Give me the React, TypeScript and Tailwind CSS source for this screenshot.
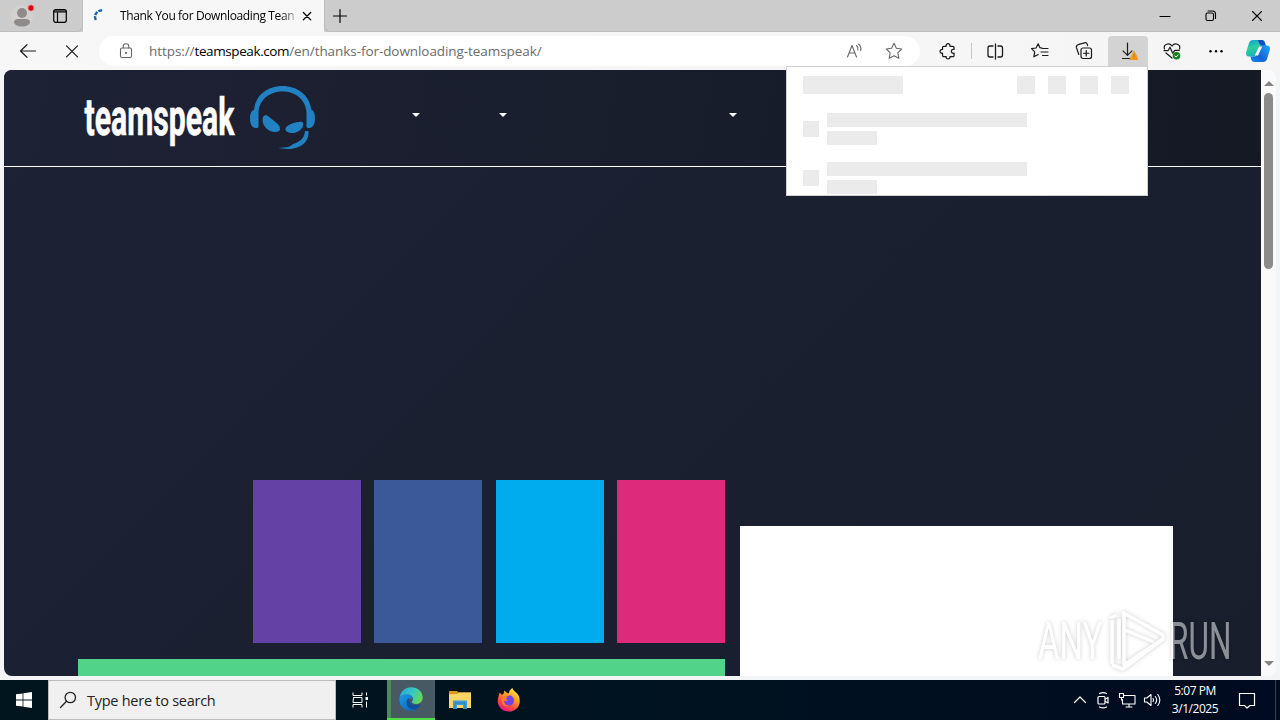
import type { ReactNode } from 'react';

type IconProps = { w?: number; h?: number; box?: string; sw?: number; className?: string; children: ReactNode };

function Icon({ w = 20, h = 20, box, sw = 1.1, className = '', children }: IconProps) {
  return (
    <svg
      width={w}
      height={h}
      viewBox={box ?? `0 0 ${w} ${h}`}
      fill="none"
      stroke="currentColor"
      strokeWidth={sw}
      strokeLinecap="round"
      strokeLinejoin="round"
      className={`shrink-0 ${className}`}
    >
      {children}
    </svg>
  );
}

function ToolButton({ active, children }: { active?: boolean; children: ReactNode }) {
  return (
    <div className={`flex h-[30px] w-10 shrink-0 items-center justify-center ${active ? 'rounded-t-sm bg-[#d3d3d3]' : ''}`}>
      {children}
    </div>
  );
}

function TabStrip() {
  return (
    <div className="flex h-8 bg-[#cccccc] text-black">
      <div className="flex w-[83px] shrink-0 items-center rounded-br-md border-r border-b border-[#bdbdbd]">
        <Icon w={30} h={32} className="ml-[8px]">
          <circle cx="14" cy="16" r="11" fill="#d3d1cf" stroke="none" />
          <circle cx="14" cy="13" r="5" fill="#8e8b89" stroke="none" />
          <path d="M6 22c0-2 2-3 4-3h8c2 0 4 1 4 3 0 2.500-3.500 4.500-8 4.500S6 24.500 6 22z" fill="#8e8b89" stroke="none" />
          <circle cx="23" cy="8" r="3.200" fill="#e3000f" stroke="#e5b8b8" strokeWidth="0.800" />
        </Icon>
        <Icon w={16} h={16} sw={1.200} className="ml-[14px]">
          <rect x="1.700" y="1.700" width="12.600" height="12.600" rx="2" />
          <path d="M2 4h12M5.500 5v9" />
          <path d="M2 3h12" />
        </Icon>
      </div>
      <div className="flex w-[241px] shrink-0 items-center bg-[#f7f7f7]">
        <Icon w={16} h={16} sw={2.400} className="ml-[9px]">
          <path d="M3.800 12C1.500 7 4.500 2.300 11 2.200" stroke="#1c64b0" strokeDasharray="4 1" strokeLinecap="butt" />
        </Icon>
        <div className="ml-3 w-[176px] whitespace-nowrap bg-gradient-to-r from-black from-90% to-[#c4c4c4] bg-clip-text font-['Open_Sans','Noto_Sans',sans-serif] text-[12px] tracking-[-0.370px] text-transparent">
          Thank You for Downloading Tean
        </div>
        <Icon w={12} h={12} sw={1.300} className="ml-[5px]">
          <path d="M2.300 2.500l7.400 7.400M9.700 2.500L2.300 9.900" />
        </Icon>
      </div>
      <div className="flex flex-1 items-center rounded-bl-md border-b border-l border-[#bdbdbd]">
        <Icon w={16} h={16} sw={1.200} className="ml-[7px]">
          <path d="M8 1.500v13M1.500 8h13" />
        </Icon>
        <div className="flex-1" />
        <div className="flex w-[138px] justify-between pr-[16px] pl-[16px]">
          <Icon w={14} h={14}>
            <path d="M2 7.500h10" />
          </Icon>
          <Icon w={14} h={14}>
            <rect x="2" y="4" width="7.500" height="7.500" rx="1.500" />
            <path d="M4 2h4.500c1.700 0 3 1.300 3 3v4.500" />
          </Icon>
          <Icon w={14} h={14}>
            <path d="M2.500 2.500l9 9M11.500 2.500l-9 9" />
          </Icon>
        </div>
      </div>
    </div>
  );
}

function AddressBar() {
  return (
    <div className="flex h-[30px] w-[821px] shrink-0 items-center rounded-full bg-white text-[#666]">
      <Icon w={16} h={18} className="ml-[19px]">
        <rect x="2.500" y="6" width="11" height="9.500" rx="1.500" />
        <path d="M5.200 6V4.500a2.800 2.800 0 0 1 5.600 0V6" />
        <circle cx="8" cy="10.800" r="0.600" fill="currentColor" />
      </Icon>
      <div className="ml-[15px] flex-1 whitespace-nowrap font-['Open_Sans','Noto_Sans',sans-serif] text-[13.500px] tracking-[-0.070px] text-[#6b6b6b]">
        https://<span className="tracking-[-0.400px] text-black">teamspeak.com</span>/en/thanks-for-downloading-teamspeak/
      </div>
      <Icon w={18} h={18} className="mr-[-1px]">
        <path d="M1.500 15L6 3.500 10.500 15M3.200 11h5.600M10.500 3.500c1.300 1.200 1.800 2.700 1.400 4.500M12.500 2c2 1.700 2.800 4 2.200 6.500" />
      </Icon>
      <Icon w={18} h={18} className="mr-[17px] ml-[22px]">
        <path d="M9 1.300l2.400 5 5.300.7-3.900 3.800 1 5.400L9 13.700l-4.800 2.500 1-5.400L1.300 7l5.300-.7z" />
      </Icon>
    </div>
  );
}

function Toolbar() {
  return (
    <div className="flex h-[38px] items-start bg-gradient-to-r from-[#f7f7f7] to-[#f5f5f5] pt-1 text-[#1b1b1b]">
      <div className="ml-[8px] flex">
        <ToolButton>
          <Icon sw={1.200}>
            <path d="M17.500 10H2.800M9 3.700L2.500 10 9 16.300" />
          </Icon>
        </ToolButton>
        <div className="ml-1">
          <ToolButton>
            <Icon sw={1.200}>
              <path d="M4.500 4.800l11 11M15.500 4.800l-11 11" />
            </Icon>
          </ToolButton>
        </div>
      </div>
      <div className="ml-[7px]">
        <AddressBar />
      </div>
      <div className="ml-2 flex items-center">
        <ToolButton>
          <Icon sw={1.300}>
            <path d="M4.500 4.500h2.500c-.2-1.800.7-2.700 2-2.700s2.200.9 2 2.700h3c.8 0 1.300.5 1.300 1.300v2c-1.900-.3-2.800.7-2.800 2s.9 2.300 2.800 2v2.400c0 .8-.5 1.300-1.300 1.300h-3c.2 1.500-.7 2.300-2 2.300s-2.200-.8-2-2.300H4.500c-.8 0-1.300-.5-1.300-1.300v-2.400C1.400 12.100.6 11.100.6 9.900s.8-2.200 2.600-2V5.800c0-.8.500-1.300 1.300-1.300z" transform="translate(1.500 1) scale(.95)" />
          </Icon>
        </ToolButton>
        <div className="mx-[3px] h-4 w-px bg-[#c6c6c6]" />
        <ToolButton>
          <Icon sw={1.300}>
            <path d="M10.500 3v15M8 5H5C3.800 5 3 5.800 3 7v7c0 1.200.8 2 2 2h3M13 5h2.500c1.200 0 2 .8 2 2v7c0 1.200-.8 2-2 2H13" />
          </Icon>
        </ToolButton>
        <div className="ml-[5px] flex gap-1">
          <ToolButton>
            <Icon sw={1.200}>
              <path d="M12 7.200L9.900 6.700 8.200 2.800 6 7l-4.500.7 3.200 3.200-.8 4.900 4.300-2.300" />
              <path d="M12.500 7.500h5.500M11 11h7M12.500 14.500h5.500" />
            </Icon>
          </ToolButton>
          <ToolButton>
            <Icon sw={1.200}>
              <rect x="7" y="7" width="10.500" height="10.500" rx="2" />
              <path d="M12.250 9.500v5.500M9.500 12.250H15M4.800 13.500L2.500 6.700C2 5 2.500 4.200 4 3.700l6.500-1.900c1.500-.4 2.400.2 2.800 1.600l.3 1.200" />
            </Icon>
          </ToolButton>
          <ToolButton active>
            <Icon sw={1.200}>
              <path d="M9.500 2v12M5 9.800l4.500 4.500L14 9.800M4.500 17.500h8" />
              <path d="M16.200 10.500l4 8H12.200z" fill="#f39a1e" stroke="#f39a1e" strokeWidth="1" />
              <path d="M16.200 13.200v2.300M16.200 17.200v.1" stroke="#c57408" strokeWidth="1" />
            </Icon>
          </ToolButton>
          <ToolButton>
            <Icon sw={1.200}>
              <path d="M2.500 8C1 3.500 7 1 10 5c3-4 9-1.500 7.500 3M4 12l6 5M2 9.700h4l2-3.500 2.700 6 2-2.800h4.500" />
              <circle cx="14.500" cy="14.800" r="3.800" fill="#13801b" stroke="none" />
              <path d="M12.800 14.900l1.200 1.200 2.300-2.300" stroke="white" strokeWidth="1" />
            </Icon>
          </ToolButton>
          <ToolButton>
            <Icon className="text-black">
              <g fill="currentColor" stroke="none">
                <circle cx="4.500" cy="10.300" r="1.200" />
                <circle cx="10" cy="10.300" r="1.200" />
                <circle cx="15.500" cy="10.300" r="1.200" />
              </g>
            </Icon>
          </ToolButton>
        </div>
        <CopilotIcon />
      </div>
    </div>
  );
}

function CopilotIcon() {
  return (
    <svg width="26" height="24" viewBox="0 0 26 24" className="ml-[9px] shrink-0">
      <defs>
        <linearGradient id="cpA" x1="0" y1="0" x2="0.300" y2="1">
          <stop offset="0" stopColor="#149bd8" />
          <stop offset="0.500" stopColor="#2ccf9e" />
          <stop offset="1" stopColor="#1cb3b8" />
        </linearGradient>
        <linearGradient id="cpB" x1="1" y1="0" x2="0" y2="1">
          <stop offset="0" stopColor="#20a6ee" />
          <stop offset="0.600" stopColor="#1664d8" />
          <stop offset="1" stopColor="#0a8fe8" />
        </linearGradient>
      </defs>
      <path d="M8 1h8.500c2 0 3 1.200 3.500 3l.8 2.700h-3c-2 0-3 .8-3.600 2.800L12.500 15c-.6 2-1.600 2.500-3 2.500H4C1.500 17.500.5 15.500 1.200 13L4 4c.7-2 2-3 4-3z" fill="url(#cpA)" />
      <path d="M12 1h4.500c2 0 3 1.200 3.500 3l.8 2.700h-4C14 6.700 14 1 12 1z" fill="#134fc4" />
      <path d="M18 23H9.500c-2 0-2.800-1-3.300-2.800l-.8-2.700h3.200c2 0 3-.8 3.600-2.800L13.800 9c.6-2 1.600-2.500 3-2.500H22c2.500 0 3.500 2 2.800 4.500L22 20c-.7 2-2 3-4 3z" fill="url(#cpB)" />
      <path d="M14 7.500h3.200L13 16.500H9.800z" fill="#f7f7f7" />
    </svg>
  );
}

function DownloadsFlyout() {
  return (
    <div className="absolute top-[66px] left-[786px] z-10 h-[130px] w-[362px] overflow-hidden border border-[#d0d0d0] bg-white pt-[9px] pl-4">
      <div className="flex">
        <div className="h-[18px] w-[100px] bg-[#ebebeb]" />
        <div className="ml-[114px] flex gap-[13px]">
          <div className="size-[18px] bg-[#ebebeb]" />
          <div className="size-[18px] bg-[#ebebeb]" />
          <div className="ml-px size-[18px] bg-[#ebebeb]" />
          <div className="size-[18px] bg-[#ebebeb]" />
        </div>
      </div>
      <div className="mt-[19px] flex flex-col gap-[17px]">
        {[0, 1].map((row) => (
          <div key={row} className="flex h-8 items-center">
            <div className="size-4 bg-[#ebebeb]" />
            <div className="ml-2 flex flex-col gap-1">
              <div className="h-[14px] w-[200px] bg-[#ebebeb]" />
              <div className="h-[14px] w-[50px] bg-[#ebebeb]" />
            </div>
          </div>
        ))}
      </div>
    </div>
  );
}

function TeamSpeakLogo() {
  return (
    <svg width="234" height="68" viewBox="0 0 234 68" className="shrink-0">
      <text
        transform="translate(1.500 50.500) scale(0.480 1)"
        fontFamily="'Roboto', 'Liberation Sans', sans-serif"
        fontSize="52"
        fontWeight="700"
        fill="white"
        stroke="white"
        strokeWidth="0.600"
        textLength="312"
        lengthAdjust="spacingAndGlyphs"
      >
        teamspeak
      </text>
      <g fill="#2181c2" transform="translate(.5 0)">
        <path d="M170.500 26C172 11 184 2 199 2s27 9 29 24c2.500.5 3.500 4 3.500 8.500S230 43.500 226 44c-2 .3-3-.5-3-2V28C222 15.500 212 7.500 199 7.500S176 15.500 175 28v14c0 1.500-1 2.300-3 2-4-.5-5.500-4.500-5.500-9.500s1.500-8 4-8.500z" />
        <path d="M179.500 33c1-1.500 3-2.300 5-1l8 6.500c2.500 2 4.500 4.500 4 7-.5 2.300-4 2.800-7 2.300-6.500-1-12-8-10-14.800z" />
        <path d="M202 44.500c1-3 6-5 11-6.200 4-1 6.500-.8 6.800 1.200.5 3.500-3.300 8-8 9.200-5 1.200-11-1-9.800-4.200z" />
        <path d="M221.500 47h3.500c1 11-8 18-21 18-4 0-7-.5-9-1.200 8 0 12-1 14.500-3.800 7-2 11.500-6 12-13z" />
      </g>
    </svg>
  );
}

function Caret() {
  return (
    <svg width="8" height="4" viewBox="0 0 8 4" className="shrink-0">
      <path d="M0 0h8L4 4z" fill="white" />
    </svg>
  );
}

function SiteHeader() {
  return (
    <header className="flex h-[97px] shrink-0 border-b border-white bg-[linear-gradient(100deg,#1e2235,#141924)]">
      <div className="mt-[14px] ml-[79px]">
        <TeamSpeakLogo />
      </div>
      <nav className="mt-[43px] flex">
        <div className="ml-[95px]"><Caret /></div>
        <div className="ml-[79px]"><Caret /></div>
        <div className="ml-[222px]"><Caret /></div>
      </nav>
    </header>
  );
}

function Page() {
  return (
    <div className="mx-1 flex h-[606px] overflow-hidden rounded-lg bg-[#fafafa]">
      <div className="flex w-[1257px] flex-col bg-[linear-gradient(135deg,#1d2235,#181e2c)]">
        <SiteHeader />
        <main className="flex flex-1 pl-[74px]">
          <section className="flex w-[647px] flex-col justify-end">
            <div className="flex h-[163px] justify-end gap-[13.400px]">
              <div className="w-[108px] bg-[#6441a5]" />
              <div className="w-[108px] bg-[#3b5998]" />
              <div className="w-[108px] bg-[#00aced]" />
              <div className="w-[108px] bg-[#dd2a7b]" />
            </div>
            <div className="mt-4 h-[17px] bg-[#52d38a]" />
          </section>
          <aside className="mt-[359px] ml-[15px] w-[433px] bg-white" />
        </main>
      </div>
      <div className="flex flex-1 flex-col items-center pt-[11px] pb-[10px]">
        <svg width="10" height="5" viewBox="0 0 10 5"><path d="M0 5L5 0l5 5z" fill="#858585" /></svg>
        <div className="mt-[7px] h-[176px] w-[9px] rounded-full bg-[#8b8b8b]" />
        <div className="flex-1" />
        <svg width="10" height="5" viewBox="0 0 10 5"><path d="M0 0l5 5 5-5z" fill="#858585" /></svg>
      </div>
    </div>
  );
}

function AnyRunMark() {
  return (
    <div className="absolute top-[604px] left-[1032px] z-10 opacity-50">
      <svg width="206" height="76" viewBox="0 0 206 76" className="drop-shadow-[0_0_2px_rgba(0,0,0,0.4)]">
        <g fill="white" fontFamily="'Roboto', 'Liberation Sans', sans-serif" fontSize="52">
          <text transform="translate(6 55) scale(0.600 1)" textLength="107" lengthAdjust="spacingAndGlyphs">ANY</text>
          <text transform="translate(137 55) scale(0.600 1)" textLength="104" lengthAdjust="spacingAndGlyphs">RUN</text>
        </g>
        <g fill="none" stroke="white" strokeWidth="3.500" strokeLinejoin="round">
          <path d="M90 8l41 23v4L92 61V8M131 35L91 65l-11-4" />
          <path d="M87 15v40M80 16v44M93 26l29 12M78 14l7-3" />
        </g>
      </svg>
    </div>
  );
}

function EdgeIcon() {
  return (
    <svg width="24" height="24" viewBox="0 0 24 24">
      <defs>
        <linearGradient id="edTop" x1="0" y1="0.300" x2="1" y2="0.600">
          <stop offset="0" stopColor="#27a8e0" />
          <stop offset="0.500" stopColor="#36c7c6" />
          <stop offset="1" stopColor="#68da55" />
        </linearGradient>
        <linearGradient id="edLow" x1="0" y1="0" x2="1" y2="1">
          <stop offset="0" stopColor="#1b9be5" />
          <stop offset="1" stopColor="#0d5bb2" />
        </linearGradient>
      </defs>
      <path d="M0.500 11C1.500 4.500 6 .3 12 .3c7 0 11.700 4.700 11.700 10.200 0 4-3 6.500-6.500 6.500-2.500 0-4.200-1-4.200-2 0-.7 1-1.300 1-3 0-2.500-2.500-4.500-6-4.500-3.500 0-6.500 1.500-7.500 3.500z" fill="url(#edTop)" />
      <path d="M.5 11C2 8.500 5 7.500 8 7.500c3.500 0 6 2 6 4.500-3-2-6 0-6 3.500 0 4 3.500 6.500 7.500 6.500 2 0 3-.5 4-1-2 2-4.500 2.800-7.500 2.800C5 23.800-.5 18 .5 11z" fill="url(#edLow)" />
      <path d="M10 11.300c-2 .8-2.500 2.500-2.500 4.200 0 4 3.500 7 8 7 2.500-.7 5-2.500 6.300-4.500.3-.6-.2-.8-.7-.6-1.600.7-3 .9-4.300.9-4.300 0-7.300-3-6.800-7z" fill="#124e9c" />
    </svg>
  );
}

function ExplorerIcon() {
  return (
    <svg width="22" height="20" viewBox="0 0 22 20">
      <path d="M0 1h8l1.500 1.500H21c.6 0 1 .4 1 1V6H0z" fill="#e0951b" />
      <path d="M0 4h8l2-1.500h12V18H0z" fill="#fbd667" />
      <path d="M4 19v-8.500h14V19h-4v-4H8v4z" fill="#3e9edb" />
      <path d="M6 19v-6h10v6" fill="none" stroke="#2875a8" strokeWidth="0.800" />
    </svg>
  );
}

function FirefoxIcon() {
  return (
    <svg width="24" height="24" viewBox="0 0 24 24">
      <defs>
        <linearGradient id="ffx" x1="0.800" y1="0" x2="0.250" y2="1">
          <stop offset="0" stopColor="#fff14a" />
          <stop offset="0.400" stopColor="#ff9a27" />
          <stop offset="0.700" stopColor="#ff4a42" />
          <stop offset="1" stopColor="#e31587" />
        </linearGradient>
      </defs>
      <path d="M2.800 4.500L5 7c.5-.5 1-.9 1.600-1.200C6.600 4.500 7 3.500 7.800 2.500c1 1.800 2 2.500 4 3C12 3 13.500 1 15.500 0c.2 3 5 4.500 6.300 8C25 16 20 23.500 12 23.500S-1 16.500 1.300 9.500C1.700 8 2 6 2.800 4.500z" fill="url(#ffx)" />
      <path d="M8 9.500c2-1.700 4-1 5-2.500 3 1.500 4 3.500 4 5.500 0 3-2.500 5-5 5s-5-1.500-5.300-4.500c1.300.7 2.500.6 3.700-.3.700-.6.300-1.200-.8-1.500-1-.3-1.500-.7-1.600-1.700z" fill="#7542e5" />
      <path d="M4.500 8.500c2-.8 4.500-.5 6 1-2 .2-1.500 2-3.500 3.500C7 16 9 17.500 12 17.500c-5 2-8-1-7.500-9z" fill="#ff7b2d" />
    </svg>
  );
}

function Taskbar() {
  return (
    <footer className="flex h-10 bg-gradient-to-r from-[#00151e] via-[#001320] to-[#000a20] font-['Open_Sans','Noto_Sans',sans-serif] text-white">
      <div className="flex w-12 shrink-0 items-center justify-center">
        <svg width="16" height="16" viewBox="0 0 16 16" fill="white">
          <path d="M0 2.300l6.600-.9v6.100H0zM7.400 1.300L16 0v7.500H7.400zM0 8.400h6.600v6.200L0 13.700zM7.400 8.400H16V16l-8.600-1.300z" />
        </svg>
      </div>
      <div className="flex w-72 shrink-0 items-center border border-[#bcbcbc] bg-[#f0f0f0] text-[#222]">
        <Icon w={18} h={18} sw={1.300} className="ml-[10px]">
          <circle cx="11.300" cy="6.500" r="5.200" />
          <path d="M7.500 10.300L1.500 16.500" />
        </Icon>
        <span className="mt-[2px] ml-[10px] text-[14.500px] tracking-[-0.260px] whitespace-nowrap">Type here to search</span>
      </div>
      <div className="flex w-[51px] shrink-0 items-center pl-[15px]">
        <Icon w={18} h={18} sw={1}>
          <path d="M2 1.500v3h9v-3M2 16.500v-3h9v3M2.500 6.500h8.500v5H2zM15.500 1.500v3M15.500 10.500v6" strokeLinecap="butt" />
          <path d="M14.500 6h2.500v3h-2.500z" fill="white" stroke="none" />
        </Icon>
      </div>
      <div className="flex w-12 shrink-0 items-center justify-center border-b-2 border-[#4dde45] bg-gradient-to-r from-[#4d8a60] from-8% to-[#475962] to-8%">
        <EdgeIcon />
      </div>
      <div className="flex w-[49px] shrink-0 items-center justify-center">
        <ExplorerIcon />
      </div>
      <div className="flex w-[49px] shrink-0 items-center justify-center">
        <FirefoxIcon />
      </div>
      <div className="flex-1" />
      <div className="flex items-center gap-[7px]">
        <Icon w={14} h={18} sw={1.200} className="mr-px">
          <path d="M1.500 11.500L7 6l5.500 5.500" />
        </Icon>
        <Icon w={16} h={18} sw={1.200}>
          <rect x="3" y="5.500" width="7" height="7.500" rx="1" />
          <path d="M10.500 8l2.500-1.500v5.500l-2.500-1.500M4.500 2.500c2.300-1.200 5-1.200 7 0M4.500 16c2.300 1.200 5 1.200 7 0" />
        </Icon>
        <Icon w={18} h={18} sw={1.100}>
          <path d="M6 4.500h11v8.500H4.500V8.500M8 16h6M11 13v3M1.500 2.500h4v4h-4zM3.500 6.500V9" />
        </Icon>
        <Icon w={18} h={18} sw={1.100}>
          <path d="M1.500 7v4h2.300L8 14.500v-11L3.800 7zM10 7.500c.7 1 .7 2 0 3M12.300 5.500c1.700 2.200 1.700 4.800 0 7M14.800 3.500c2.600 3.500 2.600 7.500 0 11" />
        </Icon>
      </div>
      <div className="ml-[9px] flex w-[50px] flex-col items-center justify-center text-[12px] leading-[18px] tracking-[-0.450px] whitespace-nowrap">
        <span>5:07 PM</span>
        <span>3/1/2025</span>
      </div>
      <div className="mr-[2px] ml-px flex w-[52px] items-center justify-center">
        <Icon w={18} h={18} sw={1.200}>
          <path d="M1.500 2.500h15v12h-4.500L9 17l-2.500-2.500h-5z" />
        </Icon>
      </div>
      <div className="mr-1 w-px bg-[#39434f]" />
    </footer>
  );
}

export default function App() {
  return (
    <div className="relative flex h-[720px] w-[1280px] flex-col overflow-hidden bg-[#f3f4f6]">
      <TabStrip />
      <Toolbar />
      <Page />
      <div className="h-1 shrink-0" />
      <Taskbar />
      <DownloadsFlyout />
      <AnyRunMark />
    </div>
  );
}
